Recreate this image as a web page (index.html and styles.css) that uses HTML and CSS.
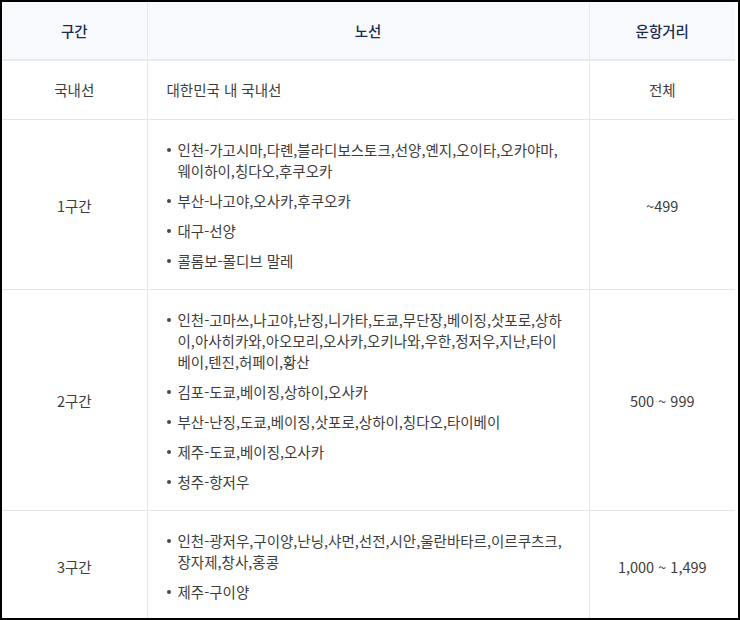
FILE: index.html
```html
<!DOCTYPE html>
<html lang="ko">
<head>
<meta charset="utf-8">
<link rel="stylesheet" href="styles.css">
</head>
<body>
<div class="frame">
  <table class="fare">
    <colgroup>
      <col class="c1"><col class="c2"><col class="c3">
    </colgroup>
    <thead>
      <tr><th>구간</th><th>노선</th><th>운항거리</th></tr>
    </thead>
    <tbody>
      <tr class="single">
        <td class="zone">국내선</td>
        <td class="route">대한민국 내 국내선</td>
        <td class="dist">전체</td>
      </tr>
      <tr>
        <td class="zone">1구간</td>
        <td class="route">
          <ul>
            <li>인천-가고시마,다롄,블라디보스토크,선양,옌지,오이타,오카야마,웨이하이,칭다오,후쿠오카</li>
            <li>부산-나고야,오사카,후쿠오카</li>
            <li>대구-선양</li>
            <li>콜롬보-몰디브 말레</li>
          </ul>
        </td>
        <td class="dist">~499</td>
      </tr>
      <tr>
        <td class="zone">2구간</td>
        <td class="route">
          <ul>
            <li>인천-고마쓰,나고야,난징,니가타,도쿄,무단장,베이징,삿포로,상하이,아사히카와,아오모리,오사카,오키나와,우한,정저우,지난,타이베이,텐진,허페이,황산</li>
            <li>김포-도쿄,베이징,상하이,오사카</li>
            <li>부산-난징,도쿄,베이징,삿포로,상하이,칭다오,타이베이</li>
            <li>제주-도쿄,베이징,오사카</li>
            <li>청주-항저우</li>
          </ul>
        </td>
        <td class="dist">500 ~ 999</td>
      </tr>
      <tr>
        <td class="zone">3구간</td>
        <td class="route">
          <ul>
            <li>인천-광저우,구이양,난닝,샤먼,선전,시안,울란바타르,이르쿠츠크,장자제,창사,홍콩</li>
            <li>제주-구이양</li>
          </ul>
        </td>
        <td class="dist">1,000 ~ 1,499</td>
      </tr>
    </tbody>
  </table>
</div>
</body>
</html>
```

FILE: styles.css
```css
html, body {
  margin: 0;
  padding: 0;
  background: #fff;
}
.frame {
  box-sizing: border-box;
  width: 740px;
  height: 620px;
  border: 2px solid #000;
  overflow: hidden;
  background: #fff;
}
.fare {
  width: 733px;
  border-collapse: collapse;
  table-layout: fixed;
  font-family: "Noto Sans CJK KR", "Noto Sans", sans-serif;
  font-size: 14.5px;
  line-height: 21px;
  color: #3d3d3d;
}
.c1 { width: 145px; }
.c2 { width: 442px; }
.c3 { width: 146px; }
.fare th {
  background: #f7f9fd;
  color: #1d2b4f;
  font-weight: 500;
  height: 57px;
  padding: 0 20px;
  border-bottom: 2px solid #e9ebef;
  border-left: 1px solid #e6e8ec;
  text-align: center;
  vertical-align: middle;
}
.fare th:first-child { border-left: none; }
.fare td {
  padding: 19px 20px 18px;
  border-top: 1px solid #e6e6e6;
  border-left: 1px solid #e6e6e6;
  vertical-align: middle;
}
.fare td:first-child { border-left: none; }
.fare tbody tr:first-child td { border-top: none; }
.fare .single td { padding-top: 18px; padding-bottom: 19px; }
.zone, .dist { text-align: center; }
.fare td.route { text-align: left; padding-left: 19px; }
.route ul {
  list-style: none;
  margin: 0;
  padding: 0;
}
.route li {
  position: relative;
  padding-left: 11px;
}
.route li + li { margin-top: 9px; }
.route li::before {
  content: "";
  position: absolute;
  left: 0;
  top: 9px;
  width: 4px;
  height: 4px;
  border-radius: 50%;
  background: #4a4a4a;
}
```
